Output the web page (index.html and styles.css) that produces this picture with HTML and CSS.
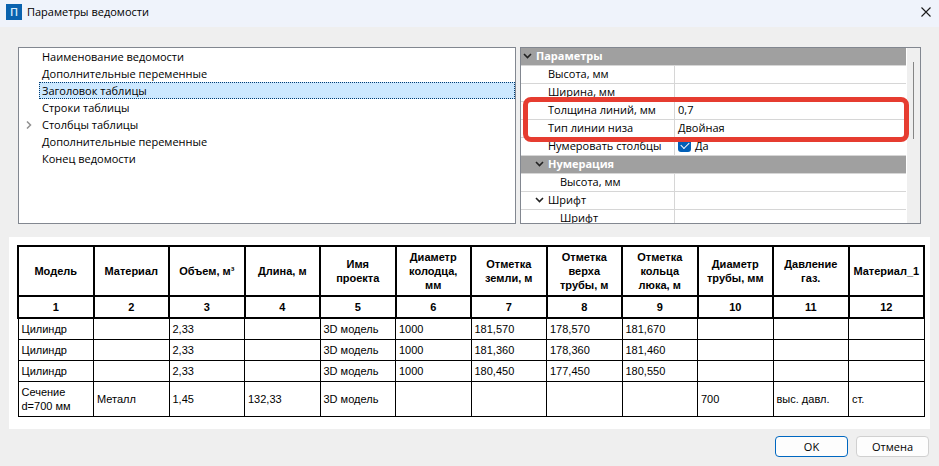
FILE: index.html
```
<!DOCTYPE html>
<html lang="ru">
  <head>
    <meta charset="UTF-8" />
    <meta name="viewport" content="width=device-width, initial-scale=1.0" />
    <title>Параметры ведомости</title>
    <link rel="stylesheet" href="styles.css">
  </head>
  <body>
    <header class="titlebar">
      <span class="logo">П</span>
      <h1>Параметры ведомости</h1>
      <button class="close" type="button" aria-label="Закрыть">
        <svg viewBox="0 0 10 10"><path d="M0.5 0.5l9 9M9.5 0.5l-9 9" /></svg>
      </button>
    </header>

    <main>
      <div class="panels">
        <ul class="tree" role="tree">
          <li role="treeitem">Наименование ведомости</li>
          <li role="treeitem">Дополнительные переменные</li>
          <li role="treeitem" class="selected" aria-selected="true">Заголовок таблицы</li>
          <li role="treeitem">Строки таблицы</li>
          <li role="treeitem" class="has-children" aria-expanded="false">
            <svg class="expander" viewBox="0 0 6 8"><path d="M1 0.5l3.5 3.5l-3.5 3.5" /></svg>
            Столбцы таблицы
          </li>
          <li role="treeitem">Дополнительные переменные</li>
          <li role="treeitem">Конец ведомости</li>
        </ul>

        <div class="params">
          <div class="params-view">
            <table class="props">
              <colgroup>
                <col class="col-name" />
                <col />
              </colgroup>
              <tbody>
                <tr class="group">
                  <th colspan="2"><svg class="chevron" viewBox="0 0 9 6"><path d="M1 1l3.5 3.5l3.5 -3.5" /></svg>Параметры</th>
                </tr>
                <tr><th>Высота, мм</th><td></td></tr>
                <tr><th>Ширина, мм</th><td></td></tr>
                <tr><th>Толщина линий, мм</th><td>0,7</td></tr>
                <tr><th>Тип линии низа</th><td>Двойная</td></tr>
                <tr>
                  <th>Нумеровать столбцы</th>
                  <td><label class="check"><input type="checkbox" checked />Да</label></td>
                </tr>
                <tr class="group nested">
                  <th colspan="2"><svg class="chevron" viewBox="0 0 9 6"><path d="M1 1l3.5 3.5l3.5 -3.5" /></svg>Нумерация</th>
                </tr>
                <tr class="deep"><th>Высота, мм</th><td></td></tr>
                <tr class="nested">
                  <th><svg class="chevron" viewBox="0 0 9 6"><path d="M1 1l3.5 3.5l3.5 -3.5" /></svg>Шрифт</th>
                  <td></td>
                </tr>
                <tr class="deep"><th>Шрифт</th><td></td></tr>
              </tbody>
            </table>
            <div class="scrollbar"><div class="thumb"></div></div>
          </div>
          <div class="highlight"></div>
        </div>
      </div>

      <div class="preview">
        <table class="report">
          <thead>
            <tr class="titles">
              <th>Модель</th>
              <th>Материал</th>
              <th>Объем, м³</th>
              <th>Длина, м</th>
              <th>Имя проекта</th>
              <th>Диаметр колодца, мм</th>
              <th>Отметка земли, м</th>
              <th>Отметка верха трубы, м</th>
              <th>Отметка кольца люка, м</th>
              <th>Диаметр трубы, мм</th>
              <th>Давление газ.</th>
              <th>Материал_1</th>
            </tr>
            <tr class="numbers">
              <th>1</th><th>2</th><th>3</th><th>4</th><th>5</th><th>6</th>
              <th>7</th><th>8</th><th>9</th><th>10</th><th>11</th><th>12</th>
            </tr>
          </thead>
          <tbody>
            <tr>
              <td>Цилиндр</td><td></td><td>2,33</td><td></td><td>3D модель</td><td>1000</td>
              <td>181,570</td><td>178,570</td><td>181,670</td><td></td><td></td><td></td>
            </tr>
            <tr>
              <td>Цилиндр</td><td></td><td>2,33</td><td></td><td>3D модель</td><td>1000</td>
              <td>181,360</td><td>178,360</td><td>181,460</td><td></td><td></td><td></td>
            </tr>
            <tr>
              <td>Цилиндр</td><td></td><td>2,33</td><td></td><td>3D модель</td><td>1000</td>
              <td>180,450</td><td>177,450</td><td>180,550</td><td></td><td></td><td></td>
            </tr>
            <tr class="section">
              <td>Сечение d=700 мм</td><td>Металл</td><td>1,45</td><td>132,33</td><td>3D модель</td><td></td>
              <td></td><td></td><td></td><td>700</td><td>выс. давл.</td><td>ст.</td>
            </tr>
          </tbody>
        </table>
      </div>
    </main>

    <footer class="buttons">
      <button class="btn primary" type="button">OK</button>
      <button class="btn" type="button">Отмена</button>
    </footer>
  </body>
</html>
```
FILE: styles.css
```
* {
  box-sizing: border-box;
}
body {
  margin: 0;
  min-height: 100vh;
  background-color: #efefef;
  color: #000;
  font-family: "Open Sans", "Noto Sans", sans-serif;
  font-size: 11px;
}
.titlebar {
  display: flex;
  align-items: center;
  height: 27px;
  padding: 0 8px 4px 6px;
  background-color: #eff3fb;
}
.logo {
  width: 16px;
  height: 16px;
  background-color: #0a62ae;
  color: #d9ecfb;
  font-weight: 600;
  line-height: 16px;
  text-align: center;
}
h1 {
  flex: 1;
  margin: 0 0 0 5px;
  font-size: 11px;
  font-weight: normal;
}
.close {
  display: flex;
  padding: 0;
  border: 0;
  background: none;
}
.close svg {
  width: 10px;
  height: 10px;
  fill: none;
  stroke: #1a1a1a;
  stroke-width: 1.1;
}
main {
  padding: 20px 9px 0;
}
.panels {
  display: grid;
  grid-template-columns: 498fr 401fr;
  gap: 4px;
  height: 177px;
  padding: 0 9px;
}

/* Report structure */
.tree {
  margin: 0;
  padding: 0 0 0 20px;
  border: 1px solid #828790;
  background-color: #fff;
  list-style: none;
}
.tree li {
  height: 17px;
  padding-left: 3px;
  line-height: 17px;
}
.tree .selected {
  padding-left: 2px;
  background-color: #cce8ff;
  border: 1px dotted #003c74;
  line-height: 15px;
}
.tree .has-children {
  display: flex;
  align-items: center;
  margin-left: -16px;
  gap: 10px;
}
.expander {
  width: 6px;
  height: 8px;
  fill: none;
  stroke: #909090;
  stroke-width: 1.5;
}

/* Property grid */
.params {
  position: relative;
  min-width: 0;
}
.params-view {
  display: flex;
  height: 177px;
  overflow: hidden;
  border: 1px solid #828790;
}
.props {
  flex: 1;
  table-layout: fixed;
  border-collapse: separate;
  border-spacing: 0;
  align-self: flex-start;
  background-color: #fff;
}
.col-name {
  width: 154px;
}
.props th,
.props td {
  height: 18px;
  padding: 0 3px 2px;
  border-bottom: 1px solid #d6d6d6;
  font-weight: normal;
  text-align: left;
  line-height: 15px;
  white-space: nowrap;
}
.props th {
  padding-left: 27px;
  border-right: 1px solid #d6d6d6;
}
.props .deep th {
  padding-left: 39px;
}
.props .nested th {
  padding-left: 14px;
}
.props .group th {
  background-color: #a0a0a0;
  border-right: 0;
  color: #fff;
  font-weight: bold;
}
.props .group:not(.nested) th {
  padding-left: 2px;
}
.chevron {
  width: 9px;
  height: 6px;
  margin-right: 4px;
  vertical-align: 1px;
  fill: none;
  stroke: #222;
  stroke-width: 1.6;
}
.check {
  display: flex;
  align-items: center;
  gap: 4px;
}
.check input {
  appearance: none;
  width: 13px;
  height: 13px;
  margin: 0;
  border-radius: 3px;
  background-color: #005fb8;
  display: grid;
  place-items: center;
}
.check input:checked::before {
  content: "";
  width: 7px;
  height: 4px;
  border: solid #fff;
  border-width: 0 0 1px 1px;
  transform: translateY(-1px) rotate(-45deg);
}
.scrollbar {
  width: 14px;
  padding-top: 14px;
  border-left: 1px solid #fff;
}
.thumb {
  width: 1px;
  height: 77px;
  margin: 0 auto;
  background-color: #858585;
}
/* Frame over the line settings */
.highlight {
  position: absolute;
  top: 50px;
  left: 3px;
  right: 12px;
  height: 45px;
  border: 5px solid #e63c30;
  border-radius: 8px;
}

/* Report preview */
.preview {
  margin-top: 13px;
  padding: 8px 5px 12px 8px;
  background-color: #fff;
}
.report {
  width: 100%;
  table-layout: fixed;
  border-collapse: collapse;
  font-family: "Liberation Sans", Arial, sans-serif;
  font-size: 11px;
  line-height: 14px;
}
.report th {
  padding: 0 3px;
  border: 2px solid #000;
}
.report td {
  height: 21px;
  padding: 0 3px;
  border: 1px solid #000;
}
.report .titles {
  height: 50px;
}
.report .numbers {
  height: 22px;
}
.report .section {
  height: 35px;
}

.buttons {
  display: flex;
  justify-content: flex-end;
  gap: 8px;
  padding: 7px 10px 8px;
}
.btn {
  width: 73px;
  height: 21px;
  padding: 0;
  border: 1px solid #d0d0d0;
  border-radius: 4px;
  background-color: #fdfdfd;
  color: #000;
  font: inherit;
}
.btn.primary {
  border-color: #0067c0;
}
```
